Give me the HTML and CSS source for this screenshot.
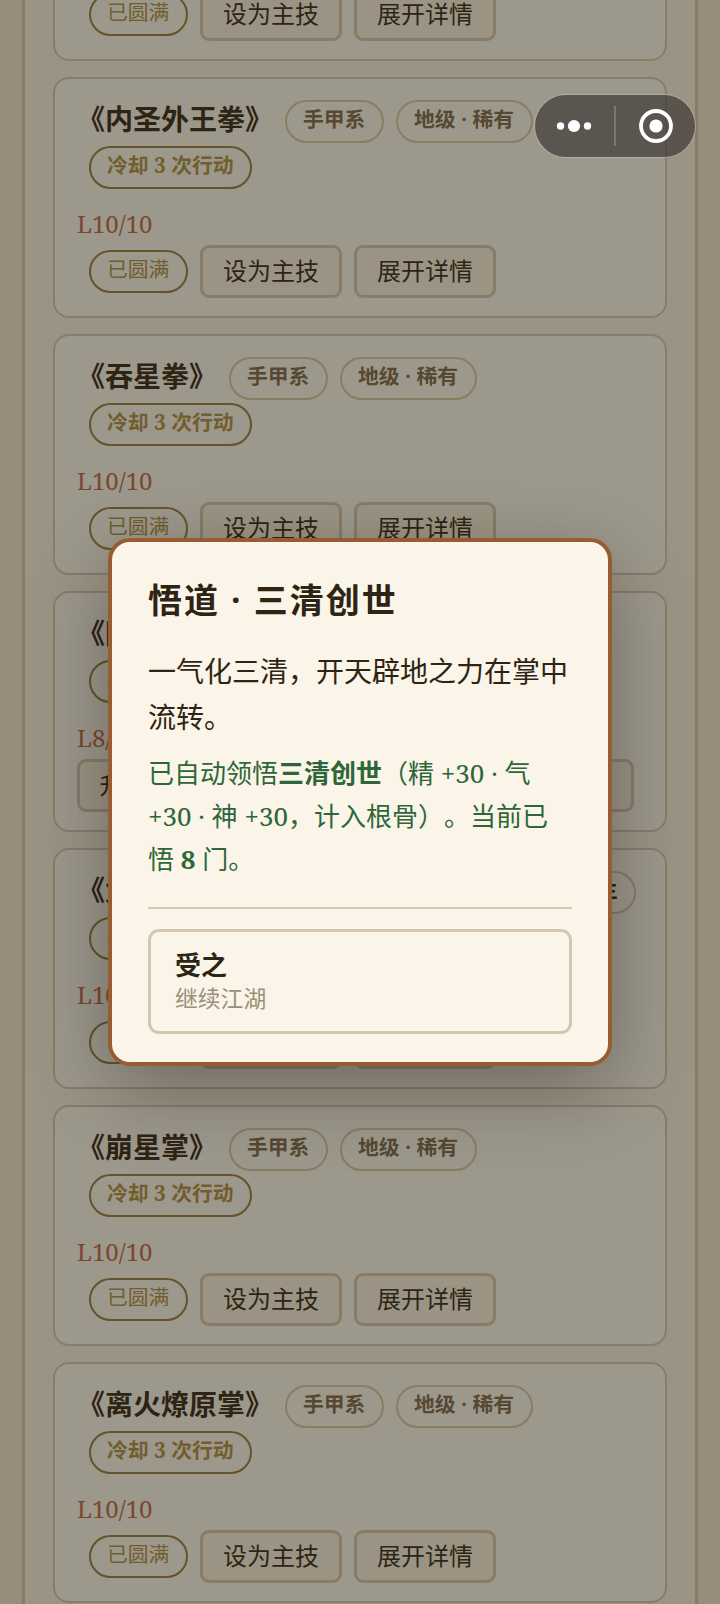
FILE: index.html
```
<!DOCTYPE html>
<html lang="zh-CN">
<head>
<meta charset="utf-8">
<title>武学</title>
<link rel="stylesheet" href="styles.css">
</head>
<body>
<main class="panel">
  <section class="card">
    <div class="tags"><span class="name">《破军拳》</span><span class="pill">手甲系</span><span class="pill">地级 · 稀有</span></div>
    <div class="tags"><span class="pill gold">冷却 3 次行动</span></div>
    <div class="level">L10/10</div>
    <div class="actions"><span class="pill gold done">已圆满</span><button class="btn">设为主技</button><button class="btn">展开详情</button></div>
  </section>
  <section class="card">
    <div class="tags"><span class="name">《内圣外王拳》</span><span class="pill">手甲系</span><span class="pill">地级 · 稀有</span></div>
    <div class="tags"><span class="pill gold">冷却 3 次行动</span></div>
    <div class="level">L10/10</div>
    <div class="actions"><span class="pill gold done">已圆满</span><button class="btn">设为主技</button><button class="btn">展开详情</button></div>
  </section>
  <section class="card">
    <div class="tags"><span class="name">《吞星拳》</span><span class="pill">手甲系</span><span class="pill">地级 · 稀有</span></div>
    <div class="tags"><span class="pill gold">冷却 3 次行动</span></div>
    <div class="level">L10/10</div>
    <div class="actions"><span class="pill gold done">已圆满</span><button class="btn">设为主技</button><button class="btn">展开详情</button></div>
  </section>
  <section class="card">
    <div class="tags"><span class="name">《阴阳掌》</span><span class="pill">手甲系</span></div>
    <div class="tags"><span class="pill gold">冷却 3 次行动</span></div>
    <div class="level">L8/10</div>
    <div class="actions wide"><button class="btn">升级</button><button class="btn">设为主技</button><button class="btn">展开详情</button></div>
  </section>
  <section class="card">
    <div class="tags"><span class="name">《太极神拳》</span><span class="pill">手甲系</span><span class="pill">地级 · 稀有</span><span class="pill main">已设为主</span></div>
    <div class="tags"><span class="pill gold">冷却 3 次行动</span></div>
    <div class="level">L10/10</div>
    <div class="actions"><span class="pill gold done">已圆满</span><button class="btn">设为主技</button><button class="btn">展开详情</button></div>
  </section>
  <section class="card">
    <div class="tags"><span class="name">《崩星掌》</span><span class="pill">手甲系</span><span class="pill">地级 · 稀有</span></div>
    <div class="tags"><span class="pill gold">冷却 3 次行动</span></div>
    <div class="level">L10/10</div>
    <div class="actions"><span class="pill gold done">已圆满</span><button class="btn">设为主技</button><button class="btn">展开详情</button></div>
  </section>
  <section class="card">
    <div class="tags"><span class="name">《离火燎原掌》</span><span class="pill">手甲系</span><span class="pill">地级 · 稀有</span></div>
    <div class="tags"><span class="pill gold">冷却 3 次行动</span></div>
    <div class="level">L10/10</div>
    <div class="actions"><span class="pill gold done">已圆满</span><button class="btn">设为主技</button><button class="btn">展开详情</button></div>
  </section>
</main>

<div class="overlay">
  <div class="modal" role="dialog">
    <h2 class="modal-title">悟道 · 三清创世</h2>
    <p class="modal-text">一气化三清，开天辟地之力在掌中流转。</p>
    <p class="modal-gain">已自动领悟<b>三清创世</b>（精 +30 · 气 +30 · 神 +30，计入根骨）。当前已悟 <b>8</b> 门。</p>
    <div class="choice">
      <strong class="choice-name">受之</strong>
      <span class="choice-note">继续江湖</span>
    </div>
  </div>
</div>

<div class="capsule">
  <svg class="capsule-icons" viewBox="0 0 160 62">
    <circle cx="25.5" cy="31" r="3.7" fill="#fff"/>
    <circle cx="39" cy="31" r="6.1" fill="#fff"/>
    <circle cx="52.5" cy="31" r="3.7" fill="#fff"/>
    <path d="M80 11v40" stroke="#85827c" stroke-width="1.6"/>
    <circle cx="121" cy="31" r="15" fill="none" stroke="#fff" stroke-width="3.8"/>
    <circle cx="121" cy="31" r="6.6" fill="#fff"/>
  </svg>
</div>
</body>
</html>
```
FILE: styles.css
```
* { box-sizing: border-box; }
html, body { height: 1604px; overflow: hidden; }
body {
  margin: 0;
  background: #978d7d;
  color: #2e2414;
  font-family: "Noto Serif", "Liberation Serif", "Noto Sans CJK SC", serif;
  text-spacing-trim: space-all;
}
.panel {
  width: 676px;
  margin: -200px 22px 0;
  padding: 20px 28px;
  border: 3px solid #887c67;
  border-top: 0;
  border-bottom: 0;
  background: #9b9484;
  display: flex;
  flex-direction: column;
  gap: 16px;
}
.card {
  height: 241px;
  padding: 19px 22px 18px;
  border: 2px solid #887d68;
  border-radius: 16px;
  background: #9d988c;
  display: flex;
  flex-direction: column;
}
.tags { height: 46px; display: flex; align-items: center; white-space: nowrap; }
.name { font-size: 28px; font-weight: 700; line-height: 40px; padding-bottom: 5px; }
.pill {
  height: 43px;
  margin-left: 12px;
  padding: 0 16.5px 4px 16px;
  border: 2px solid #8a7c62;
  border-radius: 22px;
  color: #564832;
  font-size: 20.8px;
  font-weight: 700;
  line-height: 35px;
}
.gold { border-color: #65532a; color: #715d2d; }
.done { font-weight: 400; padding-right: 17px; }
.main { color: #2e2414; }
.level { height: 55px; padding-top: 18px; color: #7a482e; font-size: 24px; line-height: 32px; }
.actions { height: 53px; display: flex; align-items: center; gap: 12px; }
.btn {
  height: 53px;
  padding: 0 20.5px 4px 19.5px;
  border: 3px solid #887c67;
  border-radius: 9px;
  background: #9b9484;
  color: #2e2414;
  font: inherit;
  font-size: 24px;
}
.wide { width: 557px; }
.wide .btn { flex: 1; text-align: left; }

.overlay {
  position: absolute;
  inset: 0;
  display: flex;
  align-items: center;
  justify-content: center;
}
.modal {
  width: 504px;
  height: 528px;
  padding: 36px;
  border: 4px solid #995c32;
  border-radius: 22px;
  background: #fbf4e8;
  box-shadow: 0 24px 80px rgba(0, 0, 0, .3);
}
.modal-title { margin: 0; font-size: 34px; line-height: 44px; letter-spacing: 2px; }
.modal-text { margin: 26px 0 0; font-size: 28px; line-height: 46px; }
.modal-gain { margin: 12px 0 0; color: #2d6739; font-size: 26px; line-height: 43px; }
.choice {
  position: relative;
  margin-top: 48px;
  height: 105px;
  padding: 16px 24px;
  border: 3px solid #d4c7ae;
  border-radius: 11px;
  display: flex;
  flex-direction: column;
}
.choice::before {
  content: "";
  position: absolute;
  left: -3px;
  right: -3px;
  top: -25px;
  height: 2px;
  background: #d4c9b4;
}
.choice-name { font-size: 26px; line-height: 34px; }
.choice-note { color: #9b8f78; font-size: 22.8px; line-height: 34px; }

.capsule {
  position: absolute;
  left: 535px;
  top: 95px;
  width: 160px;
  height: 62px;
  border-radius: 31px;
  background: rgba(56, 52, 47, .66);
  box-shadow: 0 0 0 1px rgba(190, 186, 178, .6);
}
.capsule-icons { display: block; width: 160px; height: 62px; }
```
